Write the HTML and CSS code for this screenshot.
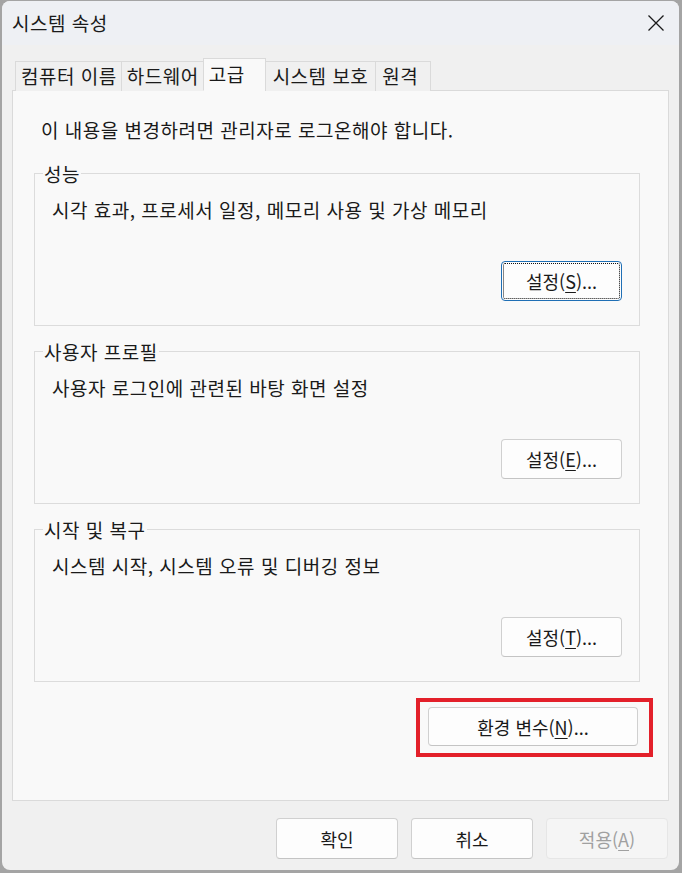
FILE: index.html
```html
<!DOCTYPE html>
<html lang="ko">
<head>
<meta charset="utf-8">
<title>시스템 속성</title>
<link rel="stylesheet" href="styles.css">
</head>
<body>
<div class="window">
  <div class="titlebar">
    <span class="title">시스템 속성</span>
    <svg class="close" width="18" height="18" viewBox="0 0 18 18"><path d="M1.5 1.5 L16.5 16.5 M16.5 1.5 L1.5 16.5" stroke="#1a1a1a" stroke-width="1.3" fill="none"/></svg>
  </div>
  <div class="content">
    <div class="tabs">
      <div class="tab">컴퓨터 이름</div>
      <div class="tab">하드웨어</div>
      <div class="tab active">고급</div>
      <div class="tab tab-protect">시스템 보호</div>
      <div class="tab tab-remote">원격</div>
    </div>
    <div class="panel">
      <p class="notice">이 내용을 변경하려면 관리자로 로그온해야 합니다.</p>
      <div class="group">
        <span class="legend">성능</span>
        <p class="desc">시각 효과, 프로세서 일정, 메모리 사용 및 가상 메모리</p>
        <div class="btnrow"><button class="btn focused"><span class="focusrect">설정(<u>S</u>)...</span></button></div>
      </div>
      <div class="group">
        <span class="legend">사용자 프로필</span>
        <p class="desc">사용자 로그인에 관련된 바탕 화면 설정</p>
        <div class="btnrow"><button class="btn">설정(<u>E</u>)...</button></div>
      </div>
      <div class="group">
        <span class="legend">시작 및 복구</span>
        <p class="desc">시스템 시작, 시스템 오류 및 디버깅 정보</p>
        <div class="btnrow"><button class="btn">설정(<u>T</u>)...</button></div>
      </div>
      <div class="envrow">
        <div class="highlight"><button class="btn envbtn">환경 변수(<u>N</u>)...</button></div>
      </div>
    </div>
    <div class="footer">
      <button class="btn fbtn">확인</button>
      <button class="btn fbtn">취소</button>
      <button class="btn fbtn disabled">적용(<u>A</u>)</button>
    </div>
  </div>
</div>
</body>
</html>
```

FILE: styles.css
```css
* { box-sizing: border-box; }
html, body {
  margin: 0;
  padding: 0;
  width: 682px;
  height: 873px;
  background: #a4a4a4;
  overflow: hidden;
}
body {
  font-family: "Noto Sans CJK KR", "Noto Sans", sans-serif;
  font-size: 19px;
  letter-spacing: 0.5px;
  line-height: 24px;
  color: #1a1a1a;
}
.window {
  margin: 1px 3px 0 2px;
  height: 869px;
  border-radius: 8px;
  background: #f0f0f0;
  overflow: hidden;
  display: flex;
  flex-direction: column;
}
.titlebar {
  height: 44px;
  background: #eef0f4;
  display: flex;
  align-items: center;
  justify-content: space-between;
  padding: 0 14px 0 10px;
  flex: none;
}
.title {
  line-height: 24px;
}
.close { display: block; }
.content {
  flex: 1;
  padding: 14px 10px 0 10px;
  display: flex;
  flex-direction: column;
}
.tabs {
  display: flex;
  align-items: flex-end;
  height: 32px;
  padding-left: 3px;
  margin-bottom: -1px;
  position: relative;
  z-index: 1;
}
.tab {
  height: 30px;
  line-height: 28px;
  padding: 0 4px 0 5px;
  border: 1px solid #dadada;
  border-bottom: none;
  margin-right: -1px;
  background: #f0f0f0;
}
.tab.active {
  height: 33px;
  background: #f9f9f9;
  padding: 0 20px 0 5px;
  border-bottom: 1px solid #f9f9f9;
  line-height: 30px;
}
.tab.tab-protect { padding-left: 7px; padding-right: 7px; }
.tab.tab-remote { padding-left: 6px; padding-right: 12px; }
.panel {
  height: 711px;
  background: #f9f9f9;
  border: 1px solid #dadada;
  padding: 27px 28px 0 21px;
}
.notice {
  margin: 0 0 31px 7px;
}
.group {
  border: 1px solid #dcdcdc;
  height: 153px;
  margin-bottom: 25px;
  padding: 0 17px 0 8px;
}
.legend {
  display: block;
  width: max-content;
  margin-top: -12px;
  padding: 0 1px;
  background: #f9f9f9;
}
.desc {
  margin: 12px 0 0 9px;
}
.btnrow {
  display: flex;
  justify-content: flex-end;
  margin-top: 39px;
}
.btn {
  font-family: inherit;
  font-size: 18px;
  letter-spacing: 0;
  color: #1a1a1a;
  background: #fdfdfd;
  border: 1px solid #d0d0d0;
  border-bottom-color: #c4c4c4;
  border-radius: 4px;
  width: 121px;
  height: 40px;
  padding: 0;
  line-height: 24px;
}
.btn u { text-underline-offset: 3px; }
.btn.focused {
  border: 1px solid #1f6fb5;
  padding: 1px;
}
.focusrect {
  display: flex;
  align-items: center;
  justify-content: center;
  width: 100%;
  height: 100%;
  border: 1px dotted #111;
  border-radius: 2px;
}
.envrow {
  display: flex;
  justify-content: flex-end;
  margin-top: -9px;
  margin-right: -13px;
}
.highlight {
  border: 4px solid #e3202a;
  padding: 5px 11px 7px 8px;
}
.envbtn { width: 210px; height: 39px; }
.footer {
  display: flex;
  justify-content: flex-end;
  gap: 13px;
  padding: 17px 1px 0 0;
}
.fbtn { width: 122px; height: 41px; }
.btn.disabled {
  background: #f5f5f5;
  border-color: #e6e6e6;
  color: #a0a0a0;
}
```
